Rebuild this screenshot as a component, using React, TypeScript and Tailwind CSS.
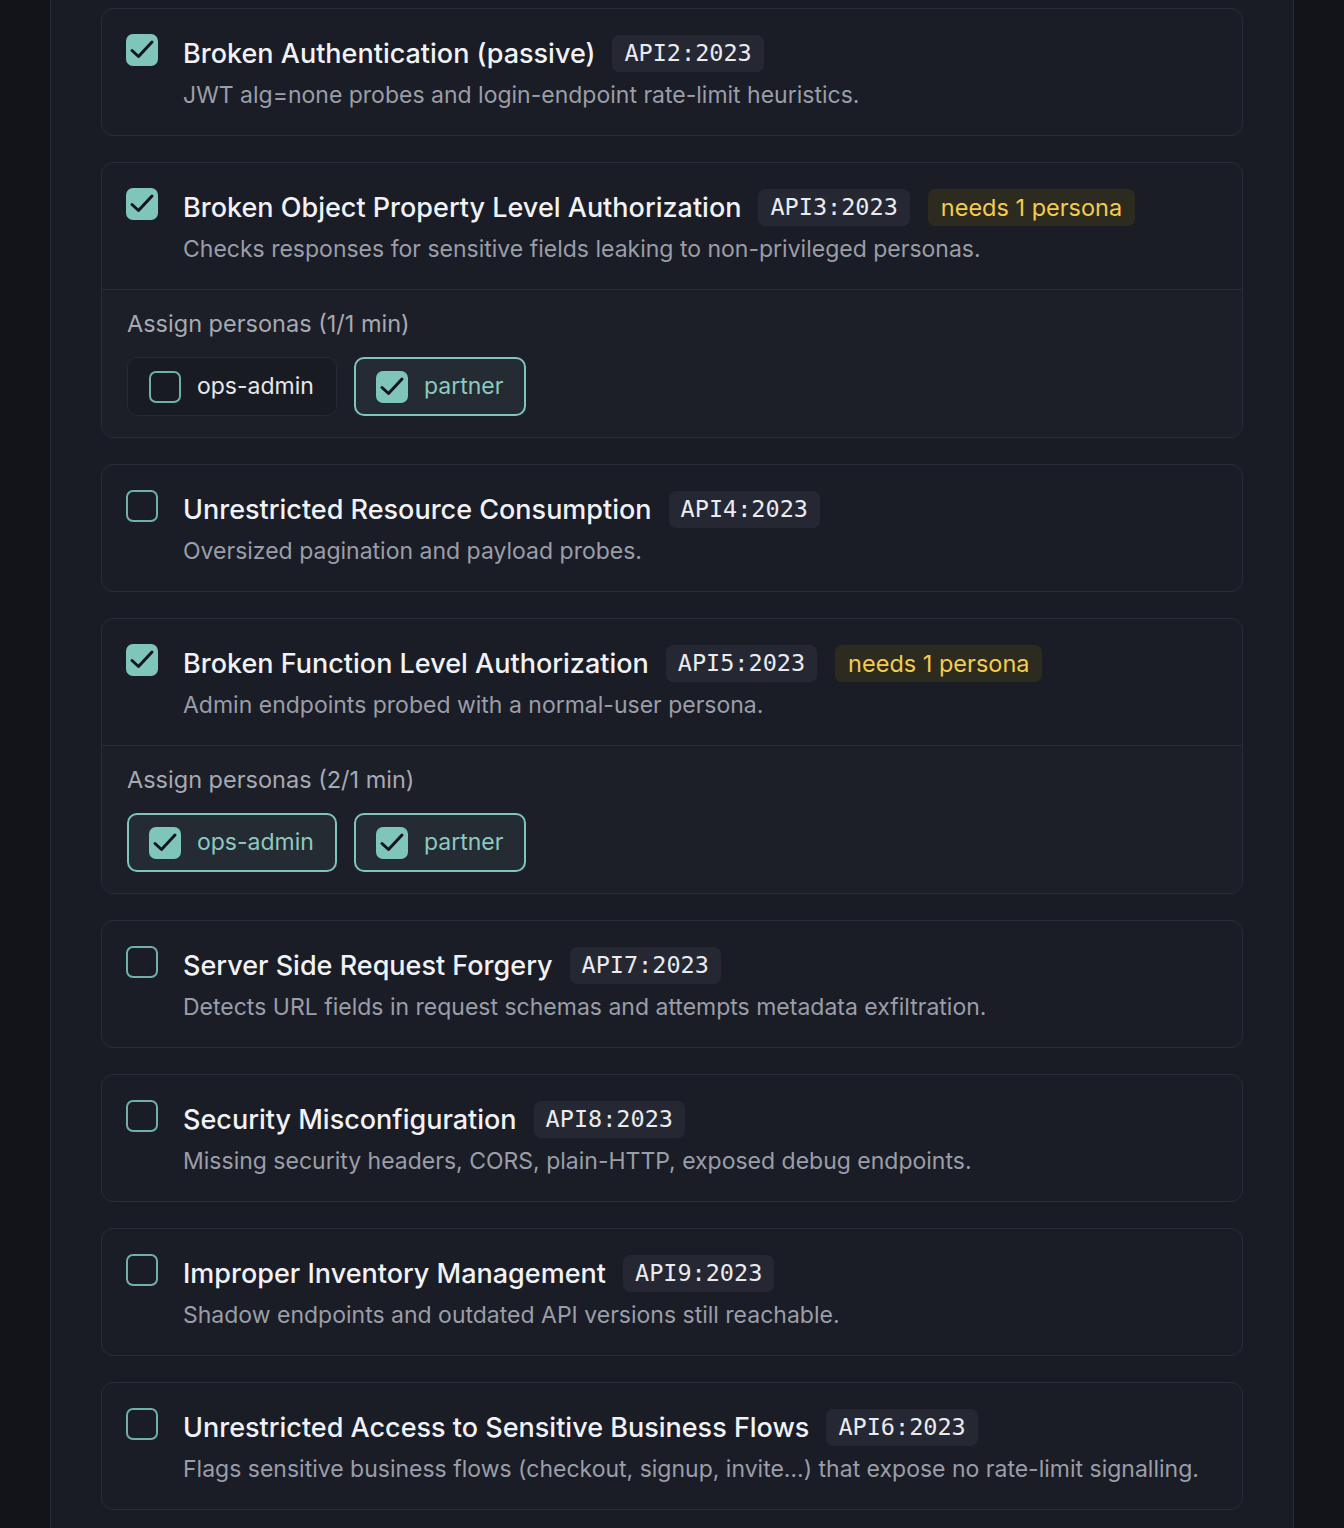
import { useState } from "react";

type Check = {
    id: string;
    title: string;
    code: string;
    desc: string;
    enabled: boolean;
    minPersonas?: number;
    personas?: string[];
};

const PERSONAS = ["ops-admin", "partner"];

const CHECKS: Check[] = [
    {
        id: "api2",
        title: "Broken Authentication (passive)",
        code: "API2:2023",
        desc: "JWT alg=none probes and login-endpoint rate-limit heuristics.",
        enabled: true,
    },
    {
        id: "api3",
        title: "Broken Object Property Level Authorization",
        code: "API3:2023",
        desc: "Checks responses for sensitive fields leaking to non-privileged personas.",
        enabled: true,
        minPersonas: 1,
        personas: ["partner"],
    },
    {
        id: "api4",
        title: "Unrestricted Resource Consumption",
        code: "API4:2023",
        desc: "Oversized pagination and payload probes.",
        enabled: false,
    },
    {
        id: "api5",
        title: "Broken Function Level Authorization",
        code: "API5:2023",
        desc: "Admin endpoints probed with a normal-user persona.",
        enabled: true,
        minPersonas: 1,
        personas: ["ops-admin", "partner"],
    },
    {
        id: "api7",
        title: "Server Side Request Forgery",
        code: "API7:2023",
        desc: "Detects URL fields in request schemas and attempts metadata exfiltration.",
        enabled: false,
    },
    {
        id: "api8",
        title: "Security Misconfiguration",
        code: "API8:2023",
        desc: "Missing security headers, CORS, plain-HTTP, exposed debug endpoints.",
        enabled: false,
    },
    {
        id: "api9",
        title: "Improper Inventory Management",
        code: "API9:2023",
        desc: "Shadow endpoints and outdated API versions still reachable.",
        enabled: false,
    },
    {
        id: "api6",
        title: "Unrestricted Access to Sensitive Business Flows",
        code: "API6:2023",
        desc: "Flags sensitive business flows (checkout, signup, invite…) that expose no rate-limit signalling.",
        enabled: false,
    },
];

function CheckBox({ checked }: { checked: boolean }) {
    if (checked) {
        return (
            <span className="block h-[32px] w-[32px] shrink-0 rounded-[7px] bg-[#80c5b9]">
                <svg viewBox="0 0 32 32" className="h-[32px] w-[32px]" fill="none" stroke="#14161d" strokeWidth={3} strokeLinecap="round" strokeLinejoin="round">
                    <path d="M6 16.5l6.5 6L26 8" />
                </svg>
            </span>
        );
    }
    return <span className="block h-[32px] w-[32px] shrink-0 rounded-[7px] border-2 border-[#6fb1a6]" />;
}

function PersonaChip({ name, selected }: { name: string; selected: boolean }) {
    return (
        <button
            className={
                selected
                    ? "flex h-[59px] items-center gap-[16px] rounded-[10px] border-2 border-[#80c5b9] bg-[#252b33] pl-[20px] pr-[21px] text-[#8ccabf]"
                    : "flex h-[59px] items-center gap-[16px] rounded-[10px] border border-[#272a34] bg-[#191b23] pl-[21px] pr-[22px] text-[#e6e8ec]"
            }
        >
            <CheckBox checked={selected} />
            <span className="text-[23px] leading-none">{name}</span>
        </button>
    );
}

function CheckCard({ check }: { check: Check }) {
    const assigned = check.personas ?? [];
    const showPersonas = check.enabled && check.minPersonas !== undefined;
    return (
        <div className="overflow-hidden rounded-[12px] border border-[#2a2d37] bg-[#1a1c26]">
            <div className="flex items-start gap-[25px] px-[24px] pt-[24px] pb-[24px]">
                <div className="mt-[1px]">
                    <CheckBox checked={check.enabled} />
                </div>
                <div className="flex min-w-0 flex-col">
                    <div className="flex h-[40px] items-center gap-[17px]">
                        <span className="text-[27px] font-medium leading-none text-[#f0f2f5]">{check.title}</span>
                        <span className="rounded-[7px] bg-[#252833] px-[12px] py-[5px] font-['DejaVu_Sans_Mono',monospace] text-[23.5px] leading-[27px] text-[#e9ebef]">
                            {check.code}
                        </span>
                        {check.minPersonas !== undefined && (
                            <span className="ml-[1px] rounded-[7px] bg-[#2d2a20] px-[13px] py-[5px] text-[23.5px] leading-[27px] text-[#f3cd4f]">
                                needs {check.minPersonas} persona
                            </span>
                        )}
                    </div>
                    <p className="mt-[6px] text-[23px] leading-[32px] text-[#9a9ea8]">{check.desc}</p>
                </div>
            </div>
            {showPersonas && (
                <div className="border-t border-[#2a2d37] bg-[#1c1e28] px-[25px] pt-[20px] pb-[21px]">
                    <div className="text-[23.5px] leading-[28px] text-[#a6aab3]">
                        Assign personas ({assigned.length}/{check.minPersonas} min)
                    </div>
                    <div className="mt-[19px] flex gap-[17px]">
                        {PERSONAS.map((p) => (
                            <PersonaChip key={p} name={p} selected={assigned.includes(p)} />
                        ))}
                    </div>
                </div>
            )}
        </div>
    );
}

export default function App() {
    const [checks] = useState(CHECKS);
    return (
        <div className="flex h-[1528px] overflow-hidden bg-[#121419] font-['Inter',sans-serif]">
            <div className="w-[50px] shrink-0" />
            <div className="w-[1244px] shrink-0 border-x border-[#282b34] bg-[#1a1c25] px-[50px] pt-[8px]">
                <div className="flex flex-col gap-[26px]">
                    {checks.map((c) => (
                        <CheckCard key={c.id} check={c} />
                    ))}
                </div>
            </div>
            <div className="flex-1" />
        </div>
    );
}
